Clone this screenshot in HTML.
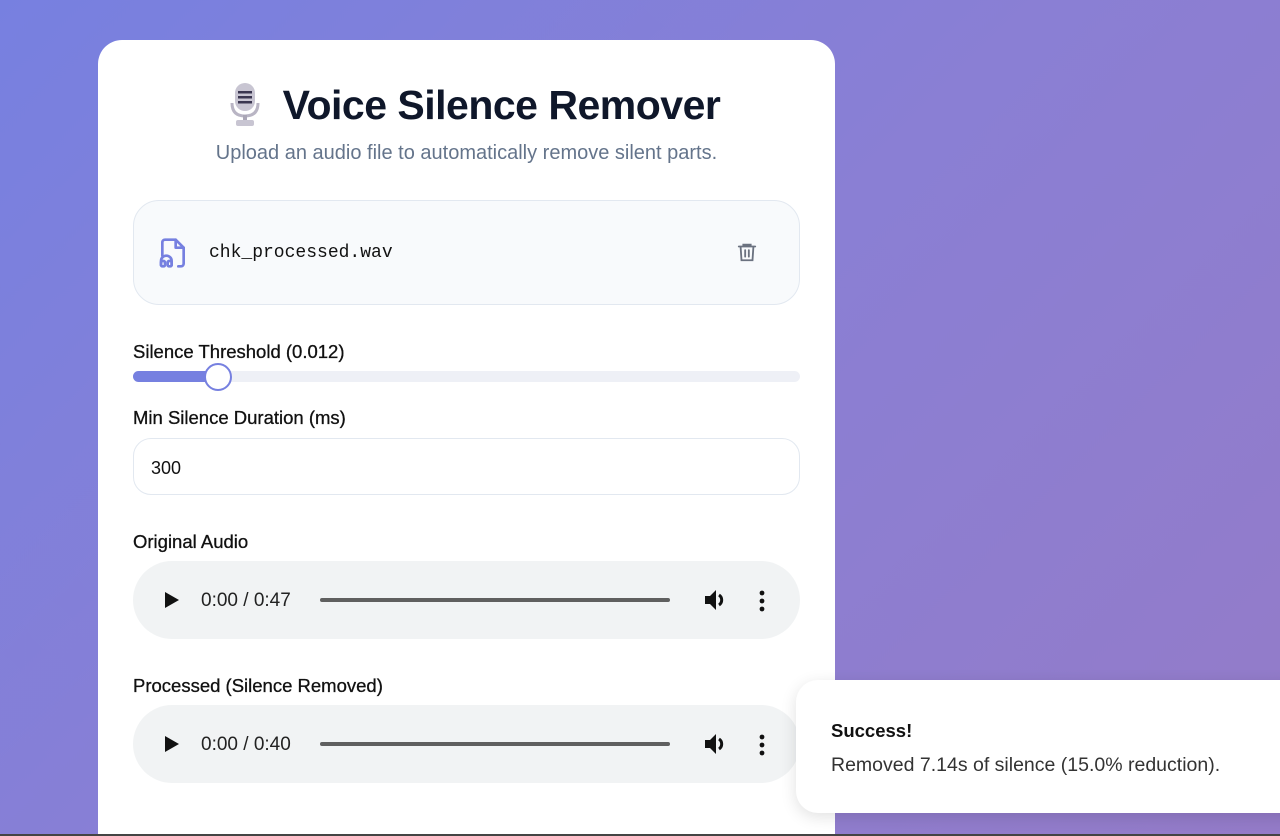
<!DOCTYPE html>
<html style="overflow:hidden;height:836px"><head><style>
*{box-sizing:border-box;margin:0;padding:0}
body{width:1280px;height:836px;overflow:hidden;position:relative;font-family:"Liberation Sans",sans-serif;background:linear-gradient(135deg,#7780e0 0%,#8a7fd4 50%,#947bc8 100%)}
.card{position:absolute;left:98px;top:40px;width:737px;height:796px;background:#fff;border-radius:24px 24px 0 0}
h1{position:absolute;left:133px;width:737px;top:82px;text-align:center;font-size:41px;font-weight:bold;color:#0f172a;letter-spacing:-0.5px}
.sub{position:absolute;left:98px;width:737px;top:142px;text-align:center;font-size:20px;color:#64748b}
.file{position:absolute;left:133px;top:200px;width:667px;height:105px;background:#f8fafc;border:1px solid #e2e8f0;border-radius:26px}
.fname{position:absolute;left:209px;top:243px;font-family:"Liberation Mono",monospace;font-size:18px;color:#111}
.lbl{position:absolute;left:133px;font-size:18.5px;color:#111;-webkit-text-stroke:0.3px #111}
.track{position:absolute;left:133px;top:371px;width:667px;height:11px;background:#eef0f6;border-radius:6px}
.fill{position:absolute;left:133px;top:371px;width:86px;height:11px;background:#7680e0;border-radius:6px}
.thumb{position:absolute;left:204px;top:363px;width:28px;height:28px;border-radius:50%;background:#fff;border:2.5px solid #7680e0}
.inp{position:absolute;left:133px;top:438px;width:667px;height:57px;border:1px solid #e2e8f0;border-radius:18px;font-size:18px;padding:19px 17px;color:#111}
.aud{position:absolute;left:133px;width:667px;height:78px;background:#f1f3f4;border-radius:39px}
.aud .t{position:absolute;left:68px;top:29px;font-size:19px;color:#222}
.aud .bar{position:absolute;left:187px;top:37px;width:350px;height:4px;background:#5f5f5f;border-radius:2px}
.toast{position:absolute;left:796px;top:680px;width:520px;height:133px;background:#fff;border-radius:22px;box-shadow:0 4px 16px rgba(0,0,0,.12)}
.bottom{position:absolute;left:0;top:834px;width:1280px;height:2px;background:#444}
</style></head><body>
<div class="card"></div>
<h1>Voice Silence Remover</h1>
<svg style="position:absolute;left:229px;top:83px" width="32" height="44" viewBox="0 0 32 44"><rect x="6" y="0" width="20" height="28" rx="10" fill="#c8c5d2"/><rect x="9" y="8" width="14" height="2.5" fill="#3a3650"/><rect x="9" y="13" width="14" height="2.5" fill="#3a3650"/><rect x="9" y="18" width="14" height="2.5" fill="#3a3650"/><path d="M3 20 Q3 33 16 33 Q29 33 29 20" stroke="#b9b5c4" stroke-width="3" fill="none"/><rect x="14" y="32" width="4" height="5" fill="#aaa6b6"/><rect x="7" y="37" width="18" height="6" rx="2" fill="#c8c5d2"/></svg>
<div class="sub">Upload an audio file to automatically remove silent parts.</div>
<div class="file"></div>
<svg style="position:absolute;left:157px;top:236px" width="32" height="34" viewBox="0 0 24 24" fill="none" stroke="#7680e0" stroke-width="2" stroke-linecap="round" stroke-linejoin="round"><path d="M4 14V4a2 2 0 0 1 2-2h8l6 6v12a2 2 0 0 1-2 2h-2"/><path d="M14 2v6h6"/><path d="M3 21v-3a4 4 0 0 1 8 0v3"/><rect x="3" y="18" width="3" height="4" rx="1"/><rect x="8" y="18" width="3" height="4" rx="1"/></svg>
<div class="fname">chk_processed.wav</div>
<svg style="position:absolute;left:736px;top:241px" width="22" height="22" viewBox="0 0 24 24" fill="none" stroke="#6b7280" stroke-width="2" stroke-linecap="round"><path d="M3 6h18M8 6V4h8v2M5 6l1 15h12l1-15M10 10v7M14 10v7"/></svg>
<div class="lbl" style="top:341px">Silence Threshold (0.012)</div>
<div class="track"></div><div class="fill"></div><div class="thumb"></div>
<div class="lbl" style="top:407px">Min Silence Duration (ms)</div>
<div class="inp">300</div>
<div class="lbl" style="top:531px">Original Audio</div>
<div class="aud" style="top:561px"><svg style="position:absolute;left:32px;top:31px" width="14" height="16"><path d="M0 0L14 8L0 16Z" fill="#111"/></svg><div class="t">0:00 / 0:47</div><div class="bar"></div><svg style="position:absolute;left:571px;top:28px" width="24" height="22" viewBox="0 0 24 22"><path d="M1 7h5l6-6v20l-6-6H1z" fill="#111"/><path d="M15 6a6 6 0 0 1 0 10" stroke="#111" stroke-width="3" fill="none"/></svg><svg style="position:absolute;left:626px;top:29px" width="6" height="22"><circle cx="3" cy="3" r="2.4" fill="#111"/><circle cx="3" cy="11" r="2.4" fill="#111"/><circle cx="3" cy="19" r="2.4" fill="#111"/></svg></div>
<div class="lbl" style="top:675px">Processed (Silence Removed)</div>
<div class="aud" style="top:705px"><svg style="position:absolute;left:32px;top:31px" width="14" height="16"><path d="M0 0L14 8L0 16Z" fill="#111"/></svg><div class="t">0:00 / 0:40</div><div class="bar"></div><svg style="position:absolute;left:571px;top:28px" width="24" height="22" viewBox="0 0 24 22"><path d="M1 7h5l6-6v20l-6-6H1z" fill="#111"/><path d="M15 6a6 6 0 0 1 0 10" stroke="#111" stroke-width="3" fill="none"/></svg><svg style="position:absolute;left:626px;top:29px" width="6" height="22"><circle cx="3" cy="3" r="2.4" fill="#111"/><circle cx="3" cy="11" r="2.4" fill="#111"/><circle cx="3" cy="19" r="2.4" fill="#111"/></svg></div>
<div class="toast"><div style="position:absolute;left:35px;top:40px;font-size:18.5px;font-weight:bold;color:#111">Success!</div><div style="position:absolute;left:35px;top:74px;font-size:19.5px;color:#333">Removed 7.14s of silence (15.0% reduction).</div></div>
<div class="bottom"></div>
</body></html>
